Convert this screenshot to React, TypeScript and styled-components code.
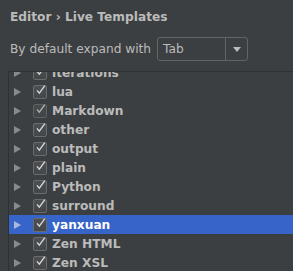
import React from 'react'
import styled, { createGlobalStyle } from 'styled-components'

const GlobalStyle = createGlobalStyle`
  html, body {
    margin: 0;
    padding: 0;
    background: #3c3f41;
  }
`

const Page = styled.div`
  width: 293px;
  height: 271px;
  overflow: hidden;
  background: #3c3f41;
  color: #bbbbbb;
  font-family: 'DejaVu Sans', 'Liberation Sans', sans-serif;
  display: flex;
  flex-direction: column;
`

const Breadcrumb = styled.div`
  padding: 8px 0 0 10px;
  height: 19px;
  font-size: 12.2px;
  font-weight: bold;
  line-height: 19px;
`

const OptionRow = styled.div`
  display: flex;
  align-items: center;
  gap: 6px;
  padding: 10px 0 0 10px;
  font-size: 12.2px;
`

const Combo = styled.div`
  width: 91px;
  height: 24px;
  box-sizing: border-box;
  border: 1px solid #646464;
  border-radius: 3px;
  display: flex;
  align-items: stretch;
`

const ComboValue = styled.div`
  flex: 1;
  padding-left: 5px;
  display: flex;
  align-items: center;
  font-size: 12.2px;
`

const ComboArrow = styled.div`
  width: 21px;
  border-left: 1px solid #646464;
  display: flex;
  align-items: center;
  justify-content: center;
`

const TreePanel = styled.div`
  margin: 10px 0 0 8px;
  flex: 1;
  overflow: hidden;
  border-top: 1px solid #2f3133;
  border-left: 1px solid #2f3133;
`

const TreeList = styled.div`
  margin-top: -9px;
`

const TreeRow = styled.div<{ $selected?: boolean }>`
  height: 19px;
  display: flex;
  align-items: center;
  background: ${({ $selected }) => ($selected ? '#3764c8' : 'transparent')};
  color: ${({ $selected }) => ($selected ? '#ffffff' : '#bbbbbb')};
  font-size: 12.2px;
  font-weight: bold;
`

const Expander = styled.div<{ $selected?: boolean }>`
  width: 0;
  height: 0;
  margin-left: 5px;
  border-top: 4px solid transparent;
  border-bottom: 4px solid transparent;
  border-left: 7px solid ${({ $selected }) => ($selected ? '#aab8dc' : '#8a8a8a')};
`

const Box = styled.div<{ $dim?: boolean }>`
  width: 14px;
  height: 14px;
  box-sizing: border-box;
  margin-left: 12px;
  margin-right: 5px;
  border: 1px solid #6b6b6b;
  border-radius: 2px;
  background: linear-gradient(#4c5052, #43474a);
  display: flex;
  align-items: center;
  justify-content: center;
  opacity: ${({ $dim }) => ($dim ? 0.75 : 1)};
`

const Check = () => (
  <svg width="14" height="14" viewBox="0 0 14 14" style={{ marginTop: -3, marginLeft: 1 }}>
    <path d="M2.5 7.5 L5.5 11 L12.5 1.5" fill="none" stroke="#d6d6d6" strokeWidth="1.8" />
  </svg>
)

const items = [
  'iterations',
  'lua',
  'Markdown',
  'other',
  'output',
  'plain',
  'Python',
  'surround',
  'yanxuan',
  'Zen HTML',
  'Zen XSL',
]

const App: React.FC = () => {
  return (
    <>
      <GlobalStyle />
      <Page>
        <Breadcrumb>Editor › Live Templates</Breadcrumb>
        <OptionRow>
          <span>By default expand with</span>
          <Combo>
            <ComboValue>Tab</ComboValue>
            <ComboArrow>
              <svg width="8" height="5" viewBox="0 0 8 5">
                <path d="M0 0 H8 L4 5 Z" fill="#bbbbbb" />
              </svg>
            </ComboArrow>
          </Combo>
        </OptionRow>
        <TreePanel>
          <TreeList>
            {items.map((name) => {
              const selected = name === 'yanxuan'
              return (
                <TreeRow key={name} $selected={selected}>
                  <Expander $selected={selected} />
                  <Box $dim={name === 'Markdown'}>
                    <Check />
                  </Box>
                  {name}
                </TreeRow>
              )
            })}
          </TreeList>
        </TreePanel>
      </Page>
    </>
  )
}

export default App
